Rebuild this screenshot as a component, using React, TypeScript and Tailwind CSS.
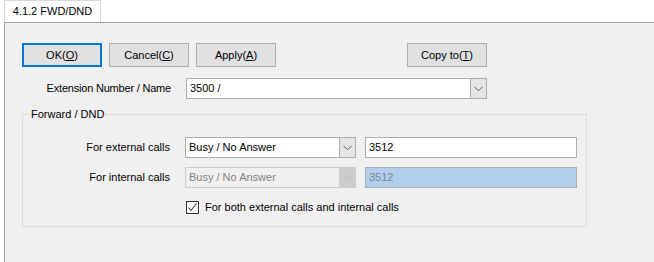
import React from "react";

const font = { fontFamily: '"Liberation Sans", Arial, sans-serif' };

function Chevron({ color }: { color: string }) {
  return (
    <svg width="9" height="6" viewBox="0 0 9 6">
      <path d="M0.5 0.8 L4.5 4.8 L8.5 0.8" fill="none" stroke={color} strokeWidth="1" />
    </svg>
  );
}

function Btn({ children, focused }: { children: React.ReactNode; focused?: boolean }) {
  return (
    <div
      className={
        "w-[80px] h-[24px] flex items-center justify-center bg-[#e1e1e1] text-[11px] text-black " +
        (focused ? "border-2 border-[#0078d7]" : "border border-[#adadad]")
      }
    >
      {children}
    </div>
  );
}

function Combo({ value, width, disabled }: { value: string; width: string; disabled?: boolean }) {
  return (
    <div
      className={
        "h-[21px] flex border " +
        width +
        (disabled ? " border-[#cccccc] bg-[#f0f0f0]" : " border-[#adadad] bg-white")
      }
    >
      <div
        className={
          "flex-1 flex items-center pl-[3px] text-[11px] " + (disabled ? "text-[#838383]" : "text-black")
        }
      >
        {value}
      </div>
      <div
        className={
          "w-[16px] flex items-center justify-center border-l " +
          (disabled ? "bg-[#cccccc] border-[#cccccc]" : "bg-[#e5e5e5] border-[#adadad]")
        }
      >
        <Chevron color={disabled ? "#bfbfbf" : "#606060"} />
      </div>
    </div>
  );
}

export default function App() {
  return (
    <div className="w-[654px] h-[262px] bg-white overflow-hidden flex flex-col" style={font}>
      <div className="h-[22px] flex">
        <div className="ml-[4px] w-[97px] h-[22px] border border-b-0 border-[#d9d9d9] bg-white flex items-center justify-center text-[11px] text-black">
          4.1.2 FWD/DND
        </div>
      </div>
      <div className="ml-[4px] flex-1 border-l border-t border-[#a0a0a0] bg-[#f0f0f0] flex flex-col">
        <div className="mt-[20px] ml-[17px] flex">
          <Btn focused>
            OK(<u>O</u>)
          </Btn>
          <div className="ml-[7px]">
            <Btn>
              Cancel(<u>C</u>)
            </Btn>
          </div>
          <div className="ml-[7px]">
            <Btn>
              Apply(<u>A</u>)
            </Btn>
          </div>
          <div className="ml-[131px]">
            <Btn>
              Copy to(<u>T</u>)
            </Btn>
          </div>
        </div>

        <div className="mt-[11px] flex items-center">
          <div className="w-[166px] text-right text-[11px] text-black tracking-[-0.2px]">Extension Number / Name</div>
          <div className="ml-[15px]">
            <Combo value="3500 /" width="w-[301px]" />
          </div>
        </div>

        <div className="relative mt-[15px] ml-[17px] w-[565px] h-[113px] border border-[#dcdcdc]">
          <span className="absolute -top-[8px] left-[7px] px-[1px] bg-[#f0f0f0] text-[11px] text-black leading-[14px]">
            Forward / DND
          </span>
          <div className="mt-[22px] flex items-center">
            <div className="w-[147px] text-right text-[11px] text-black">For external calls</div>
            <div className="ml-[15px]">
              <Combo value="Busy / No Answer" width="w-[171px]" />
            </div>
            <div className="ml-[9px] w-[212px] h-[21px] border border-[#adadad] bg-white flex items-center pl-[3px] text-[11px] text-black">
              3512
            </div>
          </div>
          <div className="mt-[9px] flex items-center">
            <div className="w-[147px] text-right text-[11px] text-black">For internal calls</div>
            <div className="ml-[15px]">
              <Combo value="Busy / No Answer" width="w-[171px]" disabled />
            </div>
            <div className="ml-[9px] w-[212px] h-[21px] border border-[#adadad] bg-[#b1cfed] flex items-center pl-[3px] text-[11px] text-[#7b8794]">
              3512
            </div>
          </div>
          <div className="mt-[11px] ml-[163px] flex items-center">
            <div className="w-[13px] h-[13px] border border-[#333333] bg-white flex items-center justify-center">
              <svg width="11" height="11" viewBox="0 0 11 11">
                <path d="M1.5 5.5 L4 8.5 L9.5 1.5" fill="none" stroke="#333333" strokeWidth="1.1" />
              </svg>
            </div>
            <span className="ml-[6px] text-[11px] text-black">For both external calls and internal calls</span>
          </div>
        </div>
      </div>
    </div>
  );
}
